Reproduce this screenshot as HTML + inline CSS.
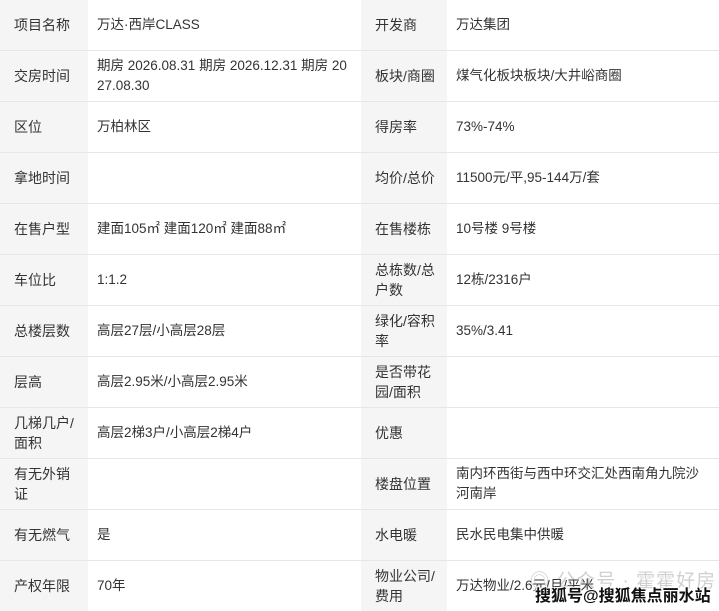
<!DOCTYPE html><html><head><meta charset="utf-8"><style>
body{margin:0;width:719px;height:610px;overflow:hidden;background:#fff;font-family:"Liberation Sans","Noto Sans CJK SC",sans-serif;font-size:13.5px;color:#333;position:relative}
table{border-collapse:collapse;table-layout:fixed;width:719px}
td{height:50px;border-bottom:1px solid #e6e6e6;padding:0 8px 0 9px;line-height:20px;vertical-align:middle;word-break:break-all}
td.l{background:#f5f5f5;padding-left:14px;padding-right:10px;font-size:14px}
.wm1{position:absolute;left:530px;top:566px;font-size:19px;color:rgba(150,150,150,.45);letter-spacing:1px;white-space:nowrap}
.wm2{position:absolute;left:535px;top:582px;font-size:16px;font-weight:bold;color:#111;white-space:nowrap;text-shadow:-1px -1px 0 #fff,1px -1px 0 #fff,-1px 1px 0 #fff,1px 1px 0 #fff}
</style></head><body>
<table>
<colgroup><col style="width:88px"><col style="width:273px"><col style="width:86px"><col style="width:272px"></colgroup>
<tr><td class="l">项目名称</td><td>万达·西岸CLASS</td><td class="l">开发商</td><td>万达集团</td></tr>
<tr><td class="l">交房时间</td><td>期房 2026.08.31 期房 2026.12.31 期房 2027.08.30</td><td class="l">板块/商圈</td><td>煤气化板块板块/大井峪商圈</td></tr>
<tr><td class="l">区位</td><td>万柏林区</td><td class="l">得房率</td><td>73%-74%</td></tr>
<tr><td class="l">拿地时间</td><td></td><td class="l">均价/总价</td><td>11500元/平,95-144万/套</td></tr>
<tr><td class="l">在售户型</td><td>建面105㎡ 建面120㎡ 建面88㎡</td><td class="l">在售楼栋</td><td>10号楼 9号楼</td></tr>
<tr><td class="l">车位比</td><td>1:1.2</td><td class="l">总栋数/总户数</td><td>12栋/2316户</td></tr>
<tr><td class="l">总楼层数</td><td>高层27层/小高层28层</td><td class="l">绿化/容积率</td><td>35%/3.41</td></tr>
<tr><td class="l">层高</td><td>高层2.95米/小高层2.95米</td><td class="l">是否带花园/面积</td><td></td></tr>
<tr><td class="l">几梯几户/面积</td><td>高层2梯3户/小高层2梯4户</td><td class="l">优惠</td><td></td></tr>
<tr><td class="l">有无外销证</td><td></td><td class="l">楼盘位置</td><td>南内环西街与西中环交汇处西南角九院沙河南岸</td></tr>
<tr><td class="l">有无燃气</td><td>是</td><td class="l">水电暖</td><td>民水民电集中供暖</td></tr>
<tr><td class="l" style="border-bottom:0">产权年限</td><td style="border-bottom:0">70年</td><td class="l" style="border-bottom:0">物业公司/费用</td><td style="border-bottom:0">万达物业/2.6元/月/平米</td></tr>
</table>
<div class="wm1">◎ 公众号 · 霍霍好房</div>
<div class="wm2">搜狐号@搜狐焦点丽水站</div>
</body></html>
